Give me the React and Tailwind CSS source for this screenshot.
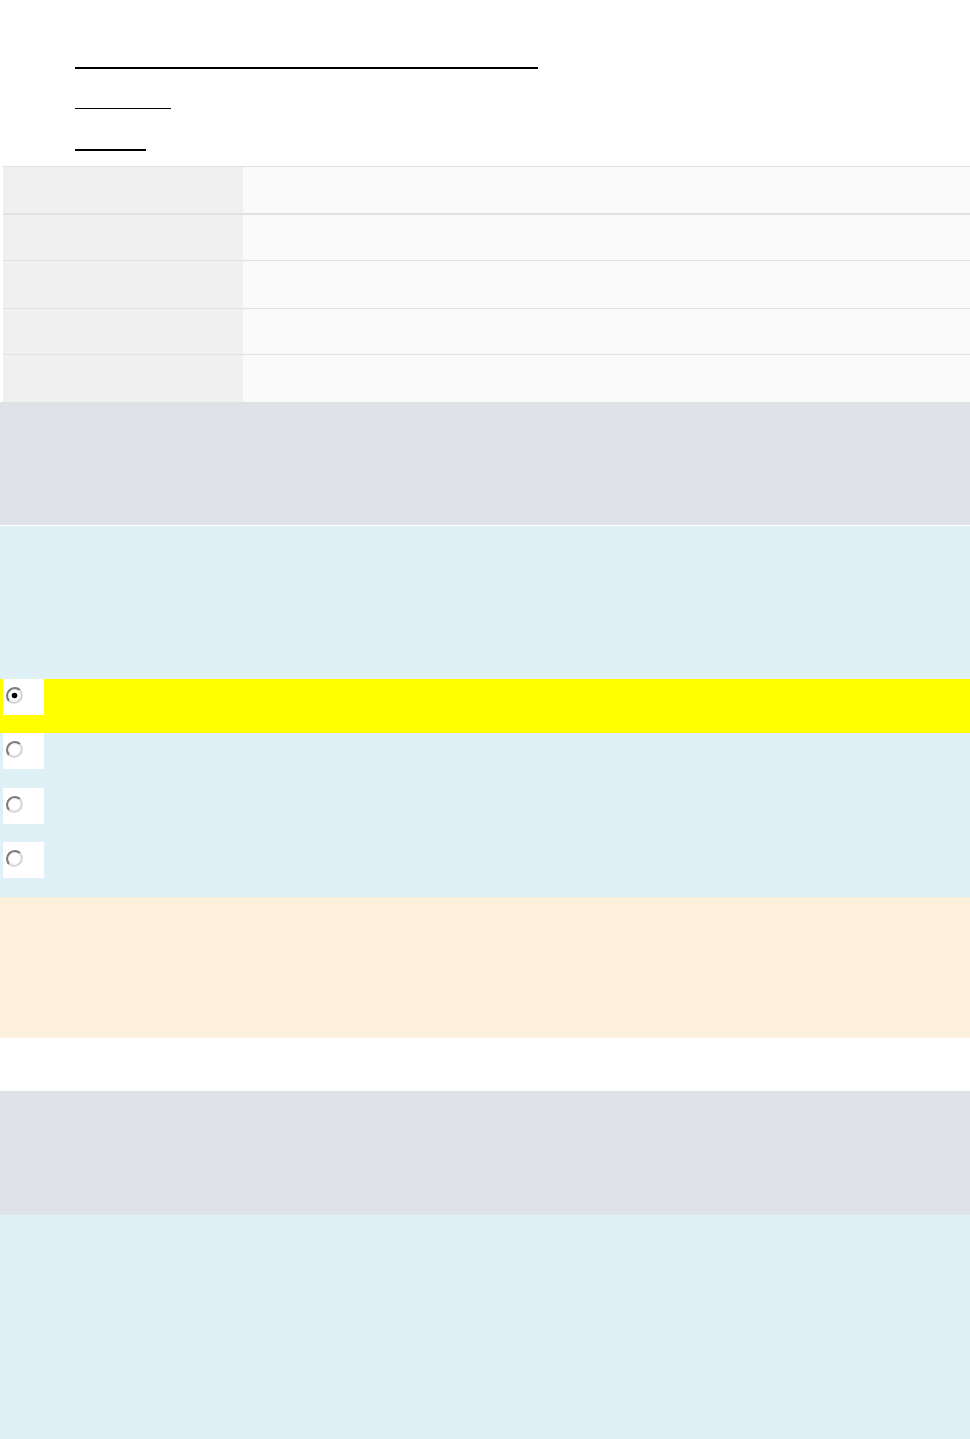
import React from 'react';

const rows = [
  { h: 'h-[46px]', border: 'border-b-2' },
  { h: 'h-[45px]', border: 'border-b' },
  { h: 'h-[47px]', border: 'border-b' },
  { h: 'h-[45px]', border: 'border-b' },
  { h: 'h-[47px]', border: '' },
];

const options = [
  { checked: true, h: 'h-[54px]' },
  { checked: false, h: 'h-[55px]' },
  { checked: false, h: 'h-[54px]' },
  { checked: false, h: 'h-[55px]' },
];

const RadioGlyph = ({ checked }) => (
  <svg width="19" height="19" viewBox="0 0 19 19">
    <circle cx="9.5" cy="9.5" r="7.8" fill="#ffffff" />
    <path d="M4 15 A7.8 7.8 0 0 1 15 4" fill="none" stroke="#7c7c7c" strokeWidth="2.2" />
    <path d="M15 4 A7.8 7.8 0 0 1 4 15" fill="none" stroke="#d2d2d2" strokeWidth="1.8" />
    <circle cx="9.5" cy="9.5" r="5.8" fill="none" stroke="#ececec" strokeWidth="1" />
    {checked && <circle cx="9.5" cy="9.5" r="2.8" fill="#000000" />}
  </svg>
);

const App = () => {
  return (
    <div className="min-h-screen bg-white font-['Liberation_Sans',Arial,sans-serif]">
      {/* Links */}
      <div className="flex flex-col pl-[75px]">
        <div className="mt-[67px] h-[2px] w-[463px] bg-black"></div>
        <div className="mt-[39px] h-px w-[96px] bg-black"></div>
        <div className="mt-[40px] h-[2px] w-[71px] bg-black"></div>
      </div>

      {/* Table */}
      <div className="mt-[15px] ml-[3px] border-t border-[#dee2e6]">
        {rows.map((r, i) => (
          <div key={i} className={`flex ${r.h} box-content ${r.border} border-[#dee2e6]`}>
            <div className="w-[240px] bg-[#f0f0f0]"></div>
            <div className="flex-1 bg-[#fafafa]"></div>
          </div>
        ))}
      </div>

      <div className="h-[123px] bg-[#dee1e6]"></div>
      <div className="h-px bg-white"></div>

      {/* Question */}
      <div className="bg-[#dff1f7]">
        <div className="h-[153px]"></div>
        {options.map((o, i) => (
          <div key={i} className={`${o.h} ${o.checked ? 'bg-[#ffff00]' : ''}`}>
            <div className="ml-[3px] flex h-[36px] w-[41px] items-start bg-white pl-[2px] pt-[7px]">
              <RadioGlyph checked={o.checked} />
            </div>
          </div>
        ))}
      </div>

      <div className="h-[141px] bg-[#fcefdc]"></div>
      <div className="h-[53px] bg-white"></div>
      <div className="h-[124px] bg-[#dee1e6]"></div>
      <div className="h-[260px] bg-[#dff1f7]"></div>
    </div>
  );
};

export default App;
